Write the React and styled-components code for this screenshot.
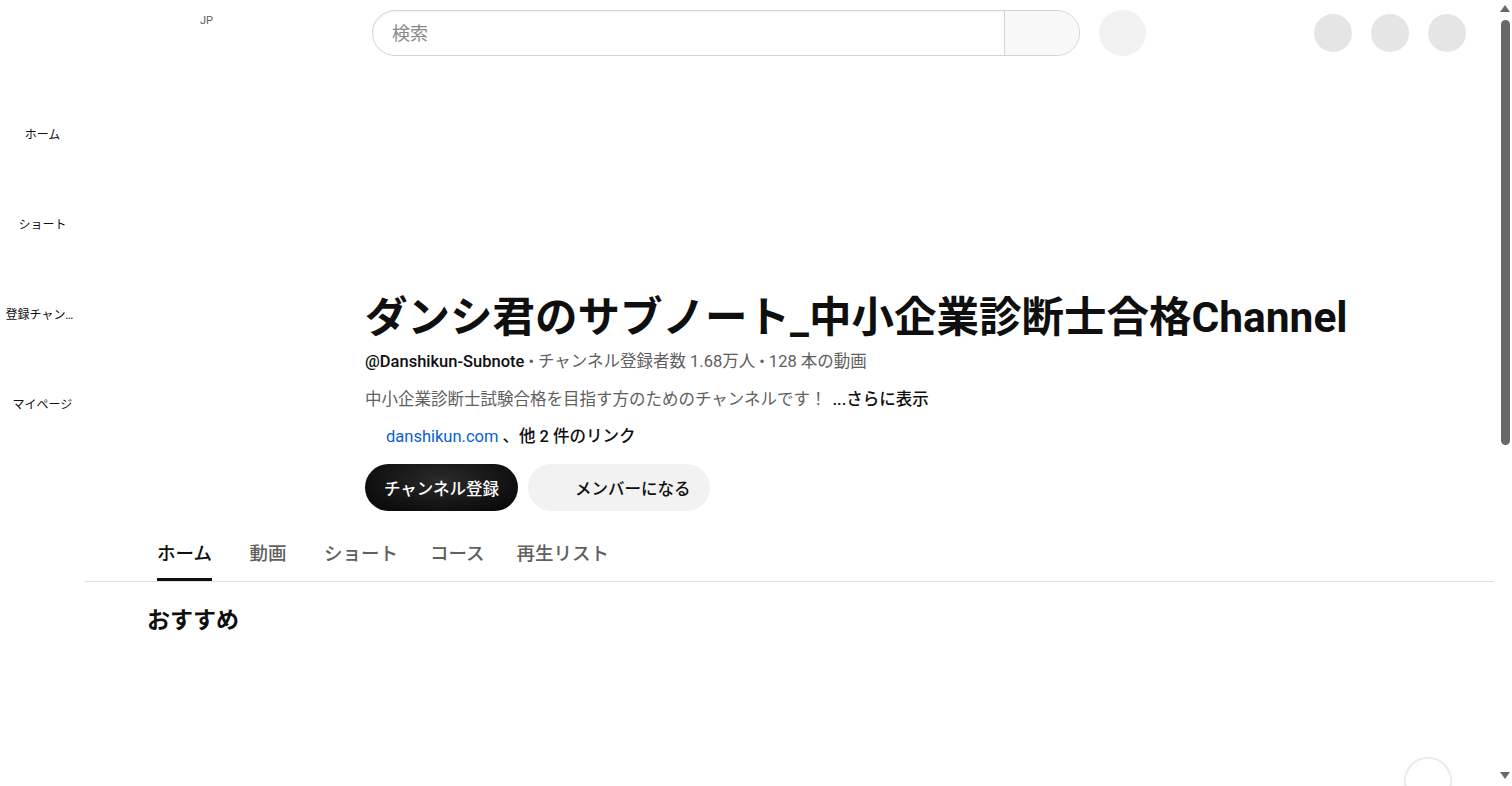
import React from "react";
import styled, { createGlobalStyle } from "styled-components";

const GlobalStyle = createGlobalStyle`
  html, body {
    margin: 0;
    padding: 0;
    background: #ffffff;
  }
  body {
    font-family: Roboto, "Noto Sans CJK JP", Arial, sans-serif;
    color: #0f0f0f;
  }
  * {
    box-sizing: border-box;
  }
`;

const Page = styled.div`
  min-height: 1380px;
  padding-right: 15px;
  display: flex;
  flex-direction: column;
`;

/* ---------- window scrollbar ---------- */

const ScrollRail = styled.div`
  position: fixed;
  top: 0;
  right: 0;
  width: 15px;
  height: 100vh;
  background: #ffffff;
  display: flex;
  flex-direction: column;
  align-items: center;
`;

const RailArrow = styled.div`
  width: 0;
  height: 0;
  margin-left: 1px;
  border-left: 5px solid transparent;
  border-right: 5px solid transparent;
  ${(p) =>
    p.$down
      ? "border-top: 7px solid #6a6a6a; margin-top: auto; margin-bottom: 7px;"
      : "border-bottom: 7px solid #6a6a6a; margin-top: 5px;"}
`;

const RailThumb = styled.div`
  width: 9px;
  height: 425px;
  margin-top: 8px;
  margin-left: 1px;
  border-radius: 5px;
  background: #686868;
`;

/* ---------- masthead ---------- */

const Masthead = styled.header`
  height: 66px;
  display: flex;
  align-items: center;
  flex-shrink: 0;
`;

const StartSection = styled.div`
  flex: 0 0 372px;
  align-self: stretch;
  display: flex;
  padding-left: 16px;
`;

const MenuSlot = styled.div`
  width: 40px;
  margin-right: 16px;
`;

const LogoSlot = styled.div`
  width: 128px;
  display: flex;
  justify-content: flex-end;
`;

const CountryCode = styled.span`
  font-size: 11px;
  color: #606060;
  margin-top: 14px;
  width: 0;
  overflow: visible;
  line-height: 13px;
`;

const SearchForm = styled.div`
  width: 708px;
  height: 46px;
  display: flex;
  border: 1px solid #d3d3d3;
  border-radius: 23px;
  overflow: hidden;
  box-shadow: inset 0 1px 2px rgba(0, 0, 0, 0.06);
`;

const SearchInput = styled.input`
  flex: 1;
  border: none;
  outline: none;
  padding: 0 0 0 19px;
  font-family: Roboto, "Noto Sans CJK JP", sans-serif;
  font-size: 18px;
  color: #0f0f0f;
  background: transparent;

  &::placeholder {
    color: #888888;
  }
`;

const SearchButton = styled.button`
  width: 75px;
  border: none;
  border-left: 1px solid #d3d3d3;
  background: #f8f8f8;
`;

const MicButton = styled.button`
  width: 47px;
  height: 46px;
  margin-left: 19px;
  border: none;
  border-radius: 50%;
  background: #f2f2f2;
`;

const EndSection = styled.div`
  margin-left: auto;
  margin-right: 31px;
  display: flex;
  gap: 19px;
`;

const IconCircle = styled.div`
  width: 38px;
  height: 38px;
  border-radius: 50%;
  background: #e5e5e5;
`;

/* ---------- mini guide ---------- */

const Body = styled.div`
  flex: 1;
  display: flex;
`;

const MiniGuide = styled.nav`
  flex: 0 0 85px;
  display: flex;
  flex-direction: column;
`;

const GuideItem = styled.a`
  height: 90px;
  padding-top: 61px;
  display: flex;
  justify-content: center;
  text-decoration: none;
`;

const GuideLabel = styled.span`
  max-width: 74px;
  font-size: 12px;
  line-height: 16px;
  color: #0f0f0f;
  white-space: nowrap;
  overflow: hidden;
  text-overflow: ellipsis;
`;

/* ---------- channel page ---------- */

const Main = styled.main`
  flex: 1;
  min-width: 0;
  padding-right: 3px;
`;

const Banner = styled.div`
  height: 210px;
  margin-bottom: 16px;
`;

const HeaderRow = styled.div`
  display: flex;
  padding-left: 72px;
`;

const AvatarSlot = styled.div`
  flex: 0 0 192px;
  margin-right: 16px;
`;

const Info = styled.div`
  display: flex;
  flex-direction: column;
`;

const Title = styled.h1`
  margin: 0;
  font-size: 42.5px;
  line-height: 52px;
  font-weight: 700;
  color: #0f0f0f;
  white-space: nowrap;
`;

const MetaLine = styled.div`
  margin-top: 7px;
  font-size: 16.5px;
  line-height: 22px;
  color: #606060;
`;

const Handle = styled.span`
  color: #0f0f0f;
  font-weight: 500;
`;

const Dot = styled.span`
  margin: 0 4px;
`;

const Description = styled.div`
  margin-top: 16px;
  font-size: 16.5px;
  line-height: 22px;
  color: #606060;
`;

const MoreLink = styled.span`
  margin-left: 6px;
  color: #0f0f0f;
  font-weight: 500;
`;

const LinksLine = styled.div`
  margin-top: 15px;
  padding-left: 21px;
  font-size: 16.5px;
  line-height: 22px;
  color: #0f0f0f;
  font-weight: 500;
`;

const SiteLink = styled.a`
  color: #065fd4;
  font-weight: 400;
  text-decoration: none;
  margin-right: 4px;
`;

const Actions = styled.div`
  margin-top: 16px;
  display: flex;
  gap: 10px;
`;

const PillButton = styled.button`
  height: 47px;
  border: none;
  border-radius: 24px;
  font-family: Roboto, "Noto Sans CJK JP", sans-serif;
  font-size: 16.5px;
  font-weight: 500;
  padding: ${(p) => (p.$withIcon ? "0 19px 0 47px" : "0 19px")};
  color: ${(p) => (p.$primary ? "#ffffff" : "#0f0f0f")};
  background: ${(p) =>
    p.$primary
      ? "radial-gradient(ellipse at 50% 35%, #2b2b2b 0%, #151515 55%, #050505 100%)"
      : "#f2f2f2"};
`;

const TabBar = styled.div`
  margin-top: 14px;
  padding-left: 72px;
  display: flex;
  gap: 32px;
  border-bottom: 1px solid #e0e0e0;
`;

const Tab = styled.div`
  height: 56px;
  min-width: 48px;
  padding-top: 1px;
  display: flex;
  align-items: center;
  justify-content: center;
  font-size: 18.5px;
  font-weight: 500;
  color: ${(p) => (p.$active ? "#0f0f0f" : "#606060")};
  border-bottom: 3px solid ${(p) => (p.$active ? "#0f0f0f" : "transparent")};
`;

const Shelf = styled.section`
  padding: 24px 0 0 62px;
`;

const ShelfTitle = styled.h2`
  margin: 0;
  font-size: 23px;
  line-height: 30px;
  font-weight: 700;
`;

const Carousel = styled.div`
  position: relative;
  height: 280px;
  margin-top: 16px;
`;

const ArrowButton = styled.button`
  position: absolute;
  top: 105px;
  right: 42px;
  width: 48px;
  height: 48px;
  border-radius: 50%;
  border: 2px solid #ececec;
  background: #ffffff;
  box-shadow: 0 2px 4px rgba(0, 0, 0, 0.06);
`;

const guideItems = ["ホーム", "ショート", "登録チャンネル", "マイページ"];
const tabs = ["ホーム", "動画", "ショート", "コース", "再生リスト"];

export default function App() {
  return (
    <Page>
      <GlobalStyle />
      <Masthead>
        <StartSection>
          <MenuSlot />
          <LogoSlot>
            <CountryCode>JP</CountryCode>
          </LogoSlot>
        </StartSection>
        <SearchForm>
          <SearchInput placeholder="検索" />
          <SearchButton aria-label="検索" />
        </SearchForm>
        <MicButton aria-label="音声検索" />
        <EndSection>
          <IconCircle />
          <IconCircle />
          <IconCircle />
        </EndSection>
      </Masthead>

      <Body>
        <MiniGuide>
          {guideItems.map((label) => (
            <GuideItem key={label} href="#">
              <GuideLabel>{label}</GuideLabel>
            </GuideItem>
          ))}
        </MiniGuide>

        <Main>
          <Banner />
          <HeaderRow>
            <AvatarSlot />
            <Info>
              <Title>ダンシ君のサブノート_中小企業診断士合格Channel</Title>
              <MetaLine>
                <Handle>@Danshikun-Subnote</Handle>
                <Dot>•</Dot>チャンネル登録者数 1.68万人
                <Dot>•</Dot>128 本の動画
              </MetaLine>
              <Description>
                中小企業診断士試験合格を目指す方のためのチャンネルです！
                <MoreLink>...さらに表示</MoreLink>
              </Description>
              <LinksLine>
                <SiteLink href="#">danshikun.com</SiteLink>、他 2 件のリンク
              </LinksLine>
              <Actions>
                <PillButton $primary>チャンネル登録</PillButton>
                <PillButton $withIcon>メンバーになる</PillButton>
              </Actions>
            </Info>
          </HeaderRow>

          <TabBar>
            {tabs.map((t, i) => (
              <Tab key={t} $active={i === 0}>
                {t}
              </Tab>
            ))}
          </TabBar>

          <Shelf>
            <ShelfTitle>おすすめ</ShelfTitle>
            <Carousel>
              <ArrowButton aria-label="次へ" />
            </Carousel>
          </Shelf>
        </Main>
      </Body>

      <ScrollRail>
        <RailArrow />
        <RailThumb />
        <RailArrow $down />
      </ScrollRail>
    </Page>
  );
}
